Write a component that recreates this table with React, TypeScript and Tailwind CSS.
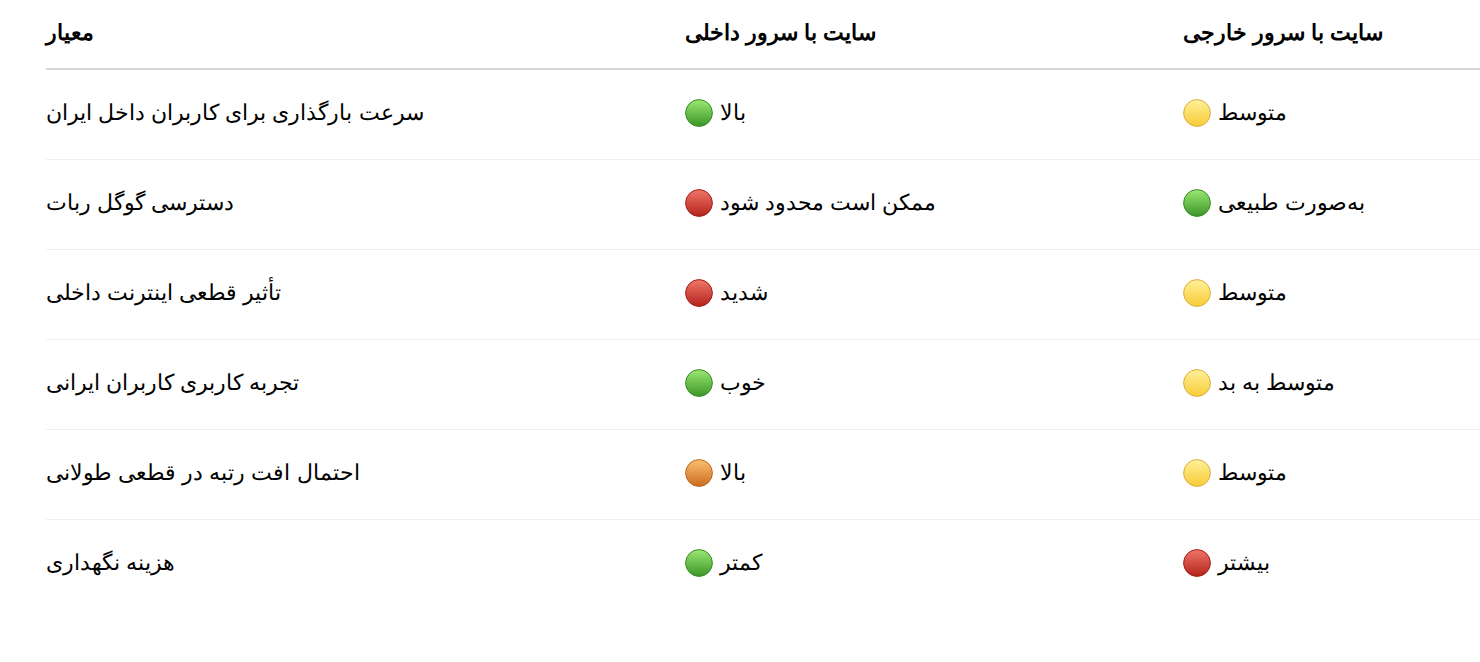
type Level = 'green' | 'yellow' | 'red' | 'orange';

const palette: Record<Level, { top: string; bottom: string; edge: string }> = {
  green: { top: '#9ae872', bottom: '#3c9628', edge: '#3a8c28' },
  yellow: { top: '#fff09a', bottom: '#f7cc36', edge: '#dcae45' },
  red: { top: '#f0766a', bottom: '#b3231b', edge: '#a52018' },
  orange: { top: '#fac070', bottom: '#cc6c1f', edge: '#c0681e' },
};

function Dot({ level }: { level: Level }) {
  const c = palette[level];
  const id = `g-${level}`;
  return (
    <svg width="28" height="28" viewBox="0 0 28 28" className="shrink-0">
      <defs>
        <linearGradient id={id} x1="0" y1="0" x2="0" y2="1">
          <stop offset="0" stopColor={c.top} />
          <stop offset="1" stopColor={c.bottom} />
        </linearGradient>
      </defs>
      <circle cx="14" cy="14" r="13.4" fill={`url(#${id})`} stroke={c.edge} strokeWidth="1" />
    </svg>
  );
}

const rows: { label: string; inside: [Level, string]; outside: [Level, string] }[] = [
  { label: 'سرعت بارگذاری برای کاربران داخل ایران', inside: ['green', 'بالا'], outside: ['yellow', 'متوسط'] },
  { label: 'دسترسی گوگل ربات', inside: ['red', 'ممکن است محدود شود'], outside: ['green', 'به‌صورت طبیعی'] },
  { label: 'تأثیر قطعی اینترنت داخلی', inside: ['red', 'شدید'], outside: ['yellow', 'متوسط'] },
  { label: 'تجربه کاربری کاربران ایرانی', inside: ['green', 'خوب'], outside: ['yellow', 'متوسط به بد'] },
  { label: 'احتمال افت رتبه در قطعی طولانی', inside: ['orange', 'بالا'], outside: ['yellow', 'متوسط'] },
  { label: 'هزینه نگهداری', inside: ['green', 'کمتر'], outside: ['red', 'بیشتر'] },
];

const cols = 'grid grid-cols-[639px_498px_498px]';

function Status({ value }: { value: [Level, string] }) {
  return (
    <div className="flex items-center gap-[7px]">
      <Dot level={value[0]} />
      <span>{value[1]}</span>
    </div>
  );
}

export default function App() {
  return (
    <div
      className="w-screen h-[662px] overflow-hidden bg-white text-black pl-[46px]"
      style={{ fontFamily: '"Liberation Sans", Arial, "Noto Sans", sans-serif' }}
    >
      <div className="w-[1635px] text-[22px] leading-[28px]">
        <div className={`${cols} h-[70px] items-center border-b-2 border-[#d6d6d6] font-bold pb-[2px]`}>
          <div>معیار</div>
          <div>سایت با سرور داخلی</div>
          <div>سایت با سرور خارجی</div>
        </div>
        {rows.map((r, i) => (
          <div
            key={i}
            className={`${cols} h-[90px] items-center pb-[4px] ${i < rows.length - 1 ? 'border-b border-[#efefef]' : ''}`}
          >
            <div>{r.label}</div>
            <Status value={r.inside} />
            <Status value={r.outside} />
          </div>
        ))}
      </div>
    </div>
  );
}
